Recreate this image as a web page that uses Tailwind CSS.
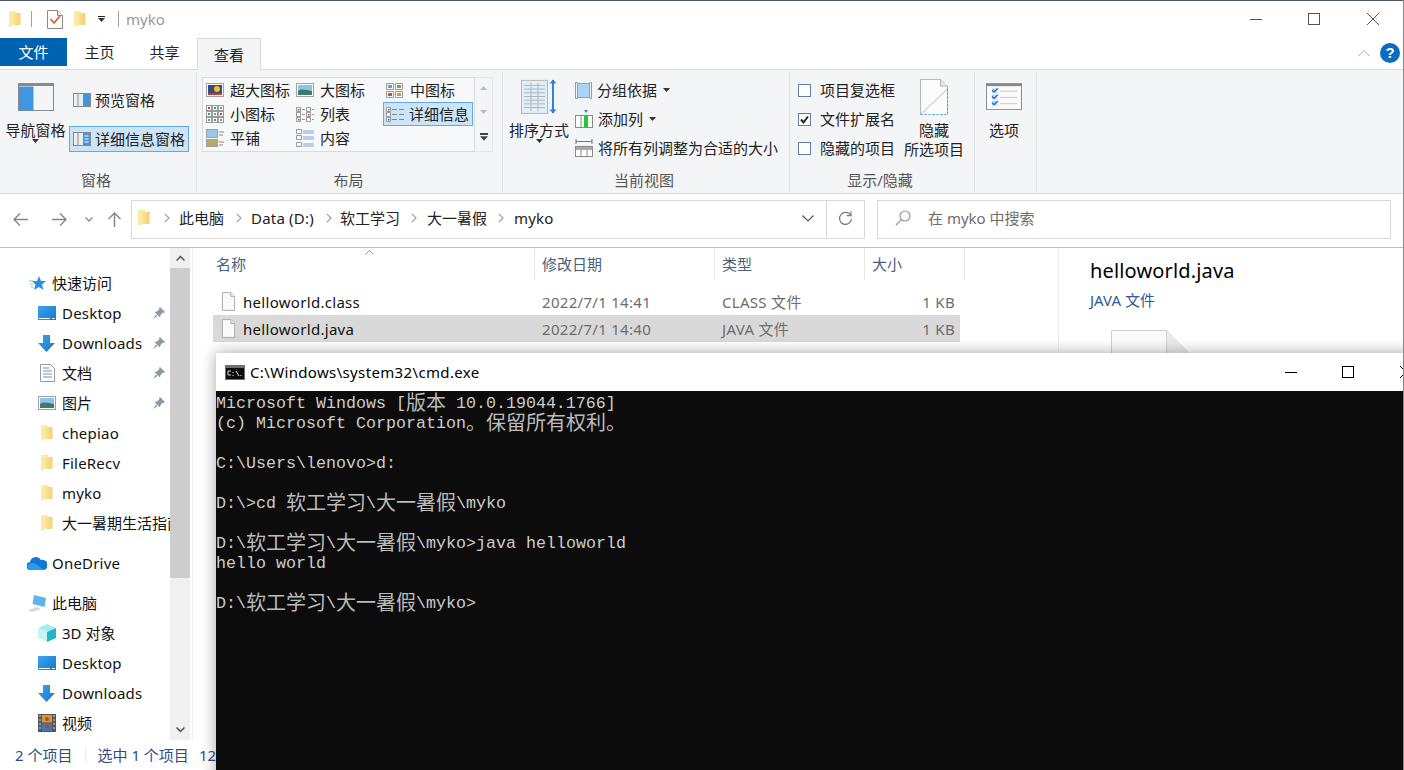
<!DOCTYPE html>
<html lang="zh-CN">
<head>
<meta charset="UTF-8" />
<title>myko</title>
<script src="https://cdn.jsdelivr.net/npm/@tailwindcss/browser@4"></script>
</head>
<body class="bg-white">
<!-- shared icons -->
<svg class="absolute w-0 h-0">
  <defs>
    <linearGradient id="fg" x1="0" x2="1" y1="0" y2="0"><stop offset="0" stop-color="#fdf0b5"/><stop offset="1" stop-color="#f6d06c"/></linearGradient>
    <linearGradient id="dk" x1="0" x2="1" y1="0" y2="1"><stop offset="0" stop-color="#3fa4ea"/><stop offset="1" stop-color="#1278cf"/></linearGradient>
  </defs>
  <symbol id="folder" viewBox="0 0 13 18"><path d="M1 1h7v2h4.500v12H4.500L1 17z" fill="url(#fg)"/><path d="M1 1h7v2H4.500v12L1 17z" fill="#fbe9a4"/></symbol>
  <symbol id="file" viewBox="0 0 16 20"><path d="M1.500.5h9l4 4v15h-13z" fill="#fafafa" stroke="#a6a6a6"/><path d="M10.500.5v4h4" fill="#eee" stroke="#a6a6a6"/></symbol>
  <symbol id="pin" viewBox="0 0 12 12"><path d="M7 0l5 5-1 1-1-.5L7.500 8 7 10.500 1.500 5 4 4.500 6.500 2 6 1zM3 7.500L0 12l4.500-3z" fill="#8b98a6"/></symbol>
  <symbol id="desktop" viewBox="0 0 18 14"><rect width="18" height="14" fill="url(#dk)"/><path d="M1 12.500h11M14 12.500h3" stroke="#fff" stroke-width="1"/></symbol>
  <symbol id="down" viewBox="0 0 17 17"><path d="M5 0h7v8h5l-8.500 9L0 8h5z" fill="url(#dk)"/></symbol>
  <symbol id="chev" viewBox="0 0 8 12"><path d="M2 1l5 5-5 5" fill="none" stroke="#a0a0a0" stroke-width="1.500"/></symbol>
  <symbol id="arrow" viewBox="0 0 7 4"><path d="M0 0h7L3.500 4z" fill="#333"/></symbol>
  <symbol id="pic" viewBox="0 0 18 14"><rect x=".5" y=".5" width="17" height="13" fill="#fff" stroke="#a0a0a0"/><rect x="2" y="2" width="14" height="10" fill="#8cc4e8"/><path d="M2 8c4-3 8-1 14 0v4H2z" fill="#3d7a6a"/></symbol>
  <symbol id="grid" viewBox="0 0 18 18"><rect x=".5" y=".5" width="5" height="5" fill="#fff" stroke="#9a9a9a"/><rect x="6.500" y=".5" width="5" height="5" fill="#fff" stroke="#9a9a9a"/><rect x="12.500" y=".5" width="5" height="5" fill="#fff" stroke="#9a9a9a"/><rect x=".5" y="6.500" width="5" height="5" fill="#fff" stroke="#9a9a9a"/><rect x="6.500" y="6.500" width="5" height="5" fill="#fff" stroke="#9a9a9a"/><rect x="12.500" y="6.500" width="5" height="5" fill="#fff" stroke="#9a9a9a"/><rect x=".5" y="12.500" width="5" height="5" fill="#fff" stroke="#9a9a9a"/><rect x="6.500" y="12.500" width="5" height="5" fill="#fff" stroke="#9a9a9a"/><rect x="12.500" y="12.500" width="5" height="5" fill="#fff" stroke="#9a9a9a"/><path d="M2 2h2v2H2zM14 8h2v2h-2z" fill="#c83a2a"/><path d="M8 2h2v2H8zM2 8h2v2H2zM8 14h2v2H8z" fill="#3d8ac8"/><path d="M14 2h2v2h-2zM8 8h2v2H8zM2 14h2v2H2zM14 14h2v2h-2z" fill="#7ba05b"/></symbol>
</svg>

<div class="relative w-[1404px] h-[770px] overflow-hidden flex flex-col bg-white border-r border-[#8a8a8a] text-[15px] leading-5 text-[#222] [font-family:'Noto_Sans','Noto_Sans_CJK_SC',sans-serif]">
  <div class="h-px shrink-0 bg-[#4b5468]"></div>

  <!-- title bar -->
  <div class="h-[37px] shrink-0 flex items-center pb-px">
    <svg class="ml-[8px] w-[13px] h-[18px]"><use href="#folder"/></svg>
    <div class="ml-[10px] w-px h-[16px] bg-[#a0a0a0]"></div>
    <svg class="ml-[15px] w-[16px] h-[19px]" viewBox="0 0 16 19"><path d="M.5.500h10l5 5v13H.5z" fill="#fff" stroke="#8a8a8a"/><path d="M10.500.500v5h5" fill="#eee" stroke="#8a8a8a"/><path d="M3.500 9l3.500 4 6-7" fill="none" stroke="#e2582a" stroke-width="1.600"/></svg>
    <svg class="ml-[10px] w-[13px] h-[18px]"><use href="#folder"/></svg>
    <div class="ml-[12px] flex flex-col items-center gap-[1px]"><div class="w-[7px] h-px bg-[#222]"></div><svg class="w-[7px] h-[4px]"><use href="#arrow"/></svg></div>
    <div class="ml-[13px] w-px h-[16px] bg-[#a0a0a0]"></div>
    <span class="ml-[7px] text-[#999]">myko</span>
    <div class="ml-auto flex items-center mr-[24px]">
      <div class="w-[12px] h-px bg-[#555]"></div>
      <div class="ml-[46px] w-[12px] h-[12px] border border-[#555]"></div>
      <svg class="ml-[47px] w-[12px] h-[12px]" viewBox="0 0 12 12"><path d="M0 0l12 12M12 0L0 12" stroke="#555" stroke-width="1"/></svg>
    </div>
  </div>

  <!-- tabs -->
  <div class="h-[32px] shrink-0 flex items-start relative">
    <div class="w-[67px] h-[28px] bg-[#0063b1] text-white flex items-center justify-center">文件</div>
    <div class="w-[65px] h-[28px] flex items-center justify-center">主页</div>
    <div class="w-[65px] h-[28px] flex items-center justify-center">共享</div>
    <div class="w-[64px] h-[32px] bg-[#f4f5f7] border border-b-0 border-[#d9d9d9] flex items-center justify-center relative z-10">查看</div>
    <div class="ml-auto flex items-center mr-[3px] mt-[5px] gap-[10px]">
      <svg class="w-[12px] h-[7px]" viewBox="0 0 12 7"><path d="M0 6.500l6-6 6 6" fill="none" stroke="#aaa"/></svg>
      <div class="w-[20px] h-[20px] rounded-full bg-[#0a6bc4] text-white flex items-center justify-center text-[15px] font-bold [font-family:'Liberation_Sans',sans-serif]">?</div>
    </div>
    <div class="absolute left-0 right-0 bottom-0 h-px bg-[#d9d9d9]"></div>
  </div>

  <!-- ribbon -->
  <div class="h-[124px] shrink-0 bg-[#f4f5f7] border-b border-[#d9d9d9] flex pt-[2px] pb-[1px]">
    <!-- 窗格 -->
    <div class="w-[197px] border-r border-[#e1e2e4] flex flex-col">
      <div class="flex-1 flex">
        <div class="w-[69px] pl-[2px] flex flex-col items-center pt-[11px]">
          <svg class="w-[36px] h-[28px]" viewBox="0 0 36 28"><rect x=".5" y=".5" width="35" height="27" fill="#f5f5f5" stroke="#8a8a8a"/><rect x="1" y="1" width="34" height="2" fill="#8a8a8a"/><rect x="1" y="3.500" width="14.500" height="24" fill="#3f97e0"/></svg>
          <span class="mt-[9px] whitespace-nowrap">导航窗格</span>
          <svg class="w-[7px] h-[4px] mt-[-1px]"><use href="#arrow"/></svg>
        </div>
        <div class="flex flex-col">
          <div class="h-[24px] mt-[16px] flex items-center pl-[4px] gap-[4px]">
            <svg class="w-[18px] h-[14px]" viewBox="0 0 18 14"><rect x=".5" y=".5" width="17" height="13" fill="#eee" stroke="#8a8a8a"/><rect x="10" y="1" width="7" height="12" fill="#3f97e0"/><path d="M5 1v12" stroke="#8a8a8a"/></svg>预览窗格
          </div>
          <div class="w-[120px] h-[26px] mt-[14px] bg-[#cce4f7] border border-[#66a7e8] flex items-center pl-[3px] gap-[4px] whitespace-nowrap">
            <svg class="w-[18px] h-[14px]" viewBox="0 0 18 14"><rect x=".5" y=".5" width="17" height="13" fill="#eee" stroke="#8a8a8a"/><rect x="10" y="1" width="7" height="12" fill="#3f97e0"/><path d="M5 1v12" stroke="#8a8a8a"/><path d="M11.500 4h4M11.500 7h4M11.500 10h4" stroke="#fff"/></svg>详细信息窗格
          </div>
        </div>
      </div>
      <div class="h-[24px] pr-[4px] text-[#555] flex items-center justify-center">窗格</div>
    </div>

    <!-- 布局 -->
    <div class="w-[306px] border-r border-[#e1e2e4] flex flex-col">
      <div class="flex-1 flex pl-[5px] pt-[5px]">
        <div class="w-[273px] h-[75px] bg-[#f7f8f9] border border-[#dadbdc] grid grid-cols-[90px_90px_90px] grid-rows-[24px_24px_24px] whitespace-nowrap">
          <div class="flex items-center pl-[3px] gap-[6px]"><svg class="w-[18px] h-[14px]" viewBox="0 0 18 14"><rect x=".5" y=".5" width="17" height="13" fill="#fff" stroke="#a0a0a0"/><rect x="2" y="2" width="14" height="10" fill="#3a4a80"/><circle cx="11" cy="6" r="3" fill="#f2c11d"/><path d="M2 10h14v2H2z" fill="#c83a2a"/></svg>超大图标</div>
          <div class="flex items-center pl-[3px] gap-[6px]"><svg class="w-[18px] h-[14px]"><use href="#pic"/></svg>大图标</div>
          <div class="flex items-center pl-[3px] gap-[7px]"><svg class="w-[17px] h-[15px]" viewBox="0 0 17 15"><path d="M.5.500h7v6h-7zM9.500.500h7v6h-7zM.5 8.500h7v6h-7zM9.500 8.500h7v6h-7z" fill="#fff" stroke="#9a9a9a"/><path d="M2 2h4v3H2z" fill="#6a9ac8"/><path d="M11 2h4v3h-4z" fill="#7ba05b"/><path d="M2 10h4v3H2z" fill="#c8502a"/><path d="M11 10h4v3h-4z" fill="#d49a2a"/></svg>中图标</div>
          <div class="flex items-center pl-[3px] gap-[6px]"><svg class="w-[18px] h-[18px]"><use href="#grid"/></svg>小图标</div>
          <div class="flex items-center pl-[3px] gap-[6px]"><svg class="w-[18px] h-[15px]" viewBox="0 0 18 15"><path d="M.5.500h4v4h-4zM.5 5.500h4v4h-4zM.5 10.500h4v4h-4zM10.500.500h4v4h-4zM10.500 5.500h4v4h-4zM10.500 10.500h4v4h-4z" fill="#fff" stroke="#999"/><path d="M2 2h1.500v1.500H2zM12 7h1.500v1.500H12zM2 12h1.500v1.500H2z" fill="#c83a2a"/><path d="M6 2.500h3M6 7.500h3M6 12.500h3M16 2.500h2M16 7.500h2M16 12.500h2" stroke="#999"/></svg>列表</div>
          <div class="flex items-center pl-[2px] gap-[5px] bg-[#cce4f7] border border-[#66a7e8]"><svg class="w-[18px] h-[15px]" viewBox="0 0 18 15"><path d="M.5.500h4v4h-4zM.5 5.500h4v4h-4zM.5 10.500h4v4h-4z" fill="#fff" stroke="#999"/><path d="M2 2h1.500v1.500H2zM2 12h1.500v1.500H2z" fill="#c83a2a"/><path d="M6 2.500h5M13 2.500h5M6 7.500h5M13 7.500h5M6 12.500h5M13 12.500h5" stroke="#888"/></svg>详细信息</div>
          <div class="flex items-center pl-[3px] gap-[6px]"><svg class="w-[18px] h-[18px]" viewBox="0 0 18 18"><rect x=".5" y=".5" width="11" height="8" fill="#9cc7e4" stroke="#a0a0a0"/><rect x=".5" y="10.500" width="11" height="7" fill="#b8a96a" stroke="#a0a0a0"/><path d="M13 3h5M13 6h4M13 13h5M13 16h4" stroke="#888"/></svg>平铺</div>
          <div class="flex items-center pl-[3px] gap-[6px]"><svg class="w-[18px] h-[18px]" viewBox="0 0 18 18"><path d="M.5.500h5v4h-5zM.5 6.500h5v4h-5zM.5 13.500h5v4h-5z" fill="#fff" stroke="#999"/><path d="M7 2h11M7 4h11M7 8h11M7 10h11M7 15h11M7 17h11" stroke="#7aa7d8"/></svg>内容</div>
          <div></div>
        </div>
        <div class="w-[18px] h-[75px] border border-l-0 border-[#e6e7e9] flex flex-col items-center justify-between py-[8px]">
          <svg class="w-[7px] h-[4px]" viewBox="0 0 7 4"><path d="M0 4h7L3.500 0z" fill="#bbb"/></svg>
          <svg class="w-[7px] h-[4px]" viewBox="0 0 7 4"><path d="M0 0h7L3.500 4z" fill="#bbb"/></svg>
          <div class="flex flex-col items-center gap-[1px] mb-[2px]"><div class="w-[8px] h-[2px] bg-[#444]"></div><svg class="w-[8px] h-[5px]" viewBox="0 0 7 4"><path d="M0 0h7L3.500 4z" fill="#444"/></svg></div>
        </div>
      </div>
      <div class="h-[24px] pr-[2px] flex items-center justify-center text-[#555]">布局</div>
    </div>

    <!-- 当前视图 -->
    <div class="w-[287px] border-r border-[#e1e2e4] flex flex-col">
      <div class="flex-1 flex">
        <div class="w-[72px] flex flex-col items-center pt-[7px]">
          <svg class="w-[36px] h-[35px]" viewBox="0 0 36 38" preserveAspectRatio="none"><rect x=".5" y="1.500" width="26" height="36" fill="#e2eef6" stroke="#b5b5b5"/><path d="M3 7h21M3 11h21M3 15h21M3 19h21M3 23h21M3 27h21M3 31h21M10 4v31M17 4v31" stroke="#a9b4bd"/><path d="M32 1v36" stroke="#2b85d8" stroke-width="2"/><path d="M28.500 5L32 .5 35.500 5zM28.500 33l3.500 4.500 3.500-4.500z" fill="#2b85d8"/></svg>
          <span class="mt-[6px] whitespace-nowrap">排序方式</span>
          <svg class="w-[7px] h-[4px] mt-[-1px]"><use href="#arrow"/></svg>
        </div>
        <div class="flex flex-col pt-[3.500px] whitespace-nowrap">
          <div class="h-[29px] flex items-center gap-[5px]"><svg class="w-[17px] h-[17px]" viewBox="0 0 17 17"><path d="M2.500.500h-2v16h2M14.500.500h2v16h-2" fill="none" stroke="#999"/><rect x="2.500" y="1.500" width="12" height="14" fill="#a9d4f7" stroke="#6aaee8"/></svg>分组依据<svg class="w-[7px] h-[4px] ml-[1px]"><use href="#arrow"/></svg></div>
          <div class="h-[29px] flex items-center gap-[5px]"><svg class="w-[18px] h-[18px]" viewBox="0 0 18 18"><rect x=".5" y="5.500" width="17" height="12" fill="#fff" stroke="#8a8a8a"/><rect x="9" y="5" width="4" height="13" fill="#25c73a"/><path d="M6 6v12" stroke="#8a8a8a"/><path d="M9 0h4l-2 3z" fill="#2b85d8"/></svg>添加列<svg class="w-[7px] h-[4px] ml-[1px]"><use href="#arrow"/></svg></div>
          <div class="h-[29px] flex items-center gap-[5px]"><svg class="w-[18px] h-[18px]" viewBox="0 0 18 18"><path d="M1 2.500h16M1 0v5M17 0v5" fill="none" stroke="#2b85d8"/><rect x=".5" y="7.500" width="17" height="10" fill="#fff" stroke="#8a8a8a"/><rect x="1" y="8" width="16" height="3" fill="#aaa"/><path d="M6 11v6M12 11v6" stroke="#8a8a8a"/></svg>将所有列调整为合适的大小</div>
        </div>
      </div>
      <div class="h-[24px] pr-[4px] flex items-center justify-center text-[#555]">当前视图</div>
    </div>

    <!-- 显示/隐藏 -->
    <div class="w-[185px] border-r border-[#e1e2e4] flex flex-col">
      <div class="flex-1 flex pl-[8px]">
        <div class="w-[106px] flex flex-col pt-[3.500px] whitespace-nowrap">
          <div class="h-[29px] flex items-center gap-[9px]"><div class="w-[13px] h-[13px] bg-white border border-[#5f7fa8]"></div>项目复选框</div>
          <div class="h-[29px] flex items-center gap-[9px]"><svg class="w-[13px] h-[13px]" viewBox="0 0 13 13"><rect x=".5" y=".5" width="12" height="12" fill="#fff" stroke="#5f7fa8"/><path d="M3 6.500l2.500 3L10 3.500" fill="none" stroke="#222" stroke-width="2"/></svg>文件扩展名</div>
          <div class="h-[29px] flex items-center gap-[9px]"><div class="w-[13px] h-[13px] bg-white border border-[#5f7fa8]"></div>隐藏的项目</div>
        </div>
        <div class="w-[60px] flex flex-col items-center pt-[7px] whitespace-nowrap">
          <svg class="w-[28px] h-[36px]" viewBox="0 0 28 38" preserveAspectRatio="none"><path d="M.5 37.500V.500h20l7 7v30" fill="#fcfcfc" stroke="#b5b5b5"/><path d="M20.500.500v7h7" fill="#e8e8e8" stroke="#b5b5b5"/><path d="M.5 37.500l27-27" stroke="#b5b5b5"/><path d="M.5 37.500h27V8" fill="none" stroke="#2b9bf0" stroke-dasharray="2 2"/></svg>
          <span class="mt-[5px]">隐藏</span>
          <span class="-mt-px">所选项目</span>
        </div>
      </div>
      <div class="h-[24px] pr-[4px] flex items-center justify-center text-[#555]">显示/隐藏</div>
    </div>

    <!-- 选项 -->
    <div class="w-[62px] pr-[3px] border-r border-[#e1e2e4] flex flex-col items-center pt-[11px]">
      <svg class="w-[36px] h-[27px]" viewBox="0 0 36 30" preserveAspectRatio="none"><rect x=".5" y=".5" width="35" height="29" fill="#fafafa" stroke="#8a8a8a"/><rect x="1" y="1" width="34" height="2.500" fill="#8a8a8a"/><path d="M14 9h17M14 16h17M14 23h17" stroke="#c8c8c8"/><path d="M6 6h5v5H6zM6 13h5v5H6zM6 20h5v5H6z" fill="#a9d4f7"/><path d="M6 8l2 2 4-4M6 15l2 2 4-4M6 22l2 2 4-4" fill="none" stroke="#2b6cb8" stroke-width="1.300"/></svg>
      <span class="mt-[10px]">选项</span>
    </div>
  </div>

  <!-- address bar -->
  <div class="h-[54px] shrink-0 border-b border-[#bdbdbd] flex items-center pb-[3px] whitespace-nowrap">
    <svg class="ml-[13px] w-[15px] h-[13px]" viewBox="0 0 15 13"><path d="M15 6.500H1M7 .5l-6 6 6 6" fill="none" stroke="#8a8a8a" stroke-width="1.500"/></svg>
    <svg class="ml-[24px] w-[15px] h-[13px]" viewBox="0 0 15 13"><path d="M0 6.500h14M8 .5l6 6-6 6" fill="none" stroke="#8a8a8a" stroke-width="1.500"/></svg>
    <svg class="ml-[18px] w-[8px] h-[5px]" viewBox="0 0 8 5"><path d="M.5.500L4 4 7.500.5" fill="none" stroke="#8a8a8a" stroke-width="1.300"/></svg>
    <svg class="ml-[15px] w-[13px] h-[15px]" viewBox="0 0 13 15"><path d="M6.500 15V1M.5 7l6-6 6 6" fill="none" stroke="#8a8a8a" stroke-width="1.500"/></svg>
    <div class="ml-[10px] w-[734px] h-[39px] border border-[#d9d9d9] flex items-center pb-[2px]">
      <svg class="ml-[5px] w-[13px] h-[18px]"><use href="#folder"/></svg>
      <svg class="ml-[13px] w-[7px] h-[10px]"><use href="#chev"/></svg>
      <span class="ml-[9px]">此电脑</span>
      <svg class="ml-[11px] w-[7px] h-[10px]"><use href="#chev"/></svg>
      <span class="ml-[9px] tracking-[0.2px]">Data (D:)</span>
      <svg class="ml-[11px] w-[7px] h-[10px]"><use href="#chev"/></svg>
      <span class="ml-[8px]">软工学习</span>
      <svg class="ml-[10px] w-[7px] h-[10px]"><use href="#chev"/></svg>
      <span class="ml-[10px]">大一暑假</span>
      <svg class="ml-[10px] w-[7px] h-[10px]"><use href="#chev"/></svg>
      <span class="ml-[10px] tracking-[0.2px]">myko</span>
      <svg class="ml-auto mr-[12px] w-[12px] h-[7px]" viewBox="0 0 12 7"><path d="M.5.500L6 6 11.500.5" fill="none" stroke="#555" stroke-width="1.200"/></svg>
      <div class="w-[38px] h-[37px] -mb-[2px] border-l border-[#d9d9d9] flex items-center justify-center pb-[2px]">
        <svg class="w-[15px] h-[15px]" viewBox="0 0 15 15"><path d="M12.800 4.500A6 6 0 1 0 13.500 8M13 .5v4.200H8.800" fill="none" stroke="#777" stroke-width="1.200"/></svg>
      </div>
    </div>
    <div class="ml-[12px] w-[514px] h-[39px] border border-[#d9d9d9] flex items-center pl-[17px] pb-[2px] text-[#6d6d6d]">
      <svg class="w-[16px] h-[16px] mr-[17px]" viewBox="0 0 16 16"><circle cx="10" cy="6" r="5" fill="none" stroke="#999" stroke-width="1.200"/><path d="M6.500 9.500L1 15" stroke="#999" stroke-width="1.300"/></svg>在 myko 中搜索
    </div>
  </div>

  <!-- main -->
  <div class="h-[492px] shrink-0 flex">
    <!-- nav -->
    <div class="w-[170px] overflow-hidden whitespace-nowrap text-[#111] pt-[20px] shrink-0 tracking-[0.2px]">
      <div class="h-[30px] flex items-center pl-[29px] gap-[6px] tracking-normal"><svg class="w-[17px] h-[15px]" viewBox="0 0 17 15"><path d="M10 0l2 5h5l-4 3.500L14.500 14 10 11l-5 3 1.500-5.500L3 5h5z" fill="#2b90e4"/><path d="M0 5h4M1 8h3M2 11h2" stroke="#7fc0f0"/></svg>快速访问</div>
      <div class="h-[30px] flex items-center pl-[38px] gap-[6px] relative"><svg class="w-[18px] h-[14px]"><use href="#desktop"/></svg>Desktop<svg class="absolute left-[153px] w-[12px] h-[12px]"><use href="#pin"/></svg></div>
      <div class="h-[30px] flex items-center pl-[38px] gap-[7px] relative"><svg class="w-[17px] h-[17px]"><use href="#down"/></svg>Downloads<svg class="absolute left-[153px] w-[12px] h-[12px]"><use href="#pin"/></svg></div>
      <div class="h-[30px] flex items-center pl-[40px] gap-[7px] relative tracking-normal"><svg class="w-[15px] h-[18px]" viewBox="0 0 15 18"><path d="M.5.500h10l4 4v13H.5z" fill="#fff" stroke="#999"/><path d="M3 4h6M3 7h9M3 10h9M3 13h9" stroke="#5f93c8"/></svg>文档<svg class="absolute left-[153px] w-[12px] h-[12px]"><use href="#pin"/></svg></div>
      <div class="h-[30px] flex items-center pl-[38px] gap-[6px] relative tracking-normal"><svg class="w-[18px] h-[14px]"><use href="#pic"/></svg>图片<svg class="absolute left-[153px] w-[12px] h-[12px]"><use href="#pin"/></svg></div>
      <div class="h-[30px] flex items-center pl-[40px] gap-[9px]"><svg class="w-[13px] h-[18px]"><use href="#folder"/></svg>chepiao</div>
      <div class="h-[30px] flex items-center pl-[40px] gap-[9px]"><svg class="w-[13px] h-[18px]"><use href="#folder"/></svg>FileRecv</div>
      <div class="h-[30px] flex items-center pl-[40px] gap-[9px]"><svg class="w-[13px] h-[18px]"><use href="#folder"/></svg>myko</div>
      <div class="h-[30px] flex items-center pl-[40px] gap-[9px] tracking-normal"><svg class="w-[13px] h-[18px] shrink-0"><use href="#folder"/></svg>大一暑期生活指南</div>
      <div class="h-[30px] mt-[10px] flex items-center pl-[27px] gap-[5px]"><svg class="w-[20px] h-[14px]" viewBox="0 0 20 14"><path d="M4 14a4 4 0 0 1-1-8 6 6 0 0 1 11-2 5 5 0 0 1 3 10z" fill="#1278cf"/><path d="M4 14c-2 0-4-3-3-5 2-2 5-3 8-1l8 6z" fill="#2b9bf0"/></svg>OneDrive</div>
      <div class="h-[30px] mt-[10px] flex items-center pl-[28px] gap-[6px] tracking-normal"><svg class="w-[18px] h-[17px]" viewBox="0 0 18 17"><path d="M6 0l12 3-1.500 9-12-3z" fill="#5fb4ee"/><path d="M0 15l9-3 4 2-9 3z" fill="#d8d8d8"/></svg>此电脑</div>
      <div class="h-[30px] flex items-center pl-[38px] gap-[6px] tracking-normal"><svg class="w-[18px] h-[18px]" viewBox="0 0 18 18"><path d="M9 0l9 4-9 4-9-4z" fill="#a8ecec"/><path d="M0 4l9 4v10l-9-4z" fill="#c9f2f2"/><path d="M18 4l-9 4v10l9-4z" fill="#22b5c9"/></svg>3D 对象</div>
      <div class="h-[30px] flex items-center pl-[38px] gap-[6px]"><svg class="w-[18px] h-[14px]"><use href="#desktop"/></svg>Desktop</div>
      <div class="h-[30px] flex items-center pl-[38px] gap-[7px]"><svg class="w-[17px] h-[17px]"><use href="#down"/></svg>Downloads</div>
      <div class="h-[30px] flex items-center pl-[38px] gap-[6px] tracking-normal"><svg class="w-[18px] h-[18px]" viewBox="0 0 18 18"><rect width="18" height="18" fill="#555"/><path d="M1 2h2M1 6h2M1 10h2M1 14h2M15 2h2M15 6h2M15 10h2M15 14h2" stroke="#ddd"/><rect x="4" y="1" width="10" height="7.500" fill="#d49a2a"/><rect x="4" y="9.500" width="10" height="7.500" fill="#3a7ab8"/><circle cx="9" cy="5" r="2" fill="#c83a2a"/><circle cx="9" cy="13" r="2" fill="#c83a2a"/></svg>视频</div>
    </div>
    <!-- nav scrollbar -->
    <div class="w-[20px] bg-[#f0f0f0] flex flex-col shrink-0">
      <div class="h-[20px] flex items-center justify-center"><svg class="w-[9px] h-[6px]" viewBox="0 0 9 6"><path d="M.5 5.500l4-4 4 4" fill="none" stroke="#505050" stroke-width="1.500"/></svg></div>
      <div class="h-[310px] bg-[#cdcdcd]"></div>
      <div class="flex-1"></div>
      <div class="h-[20px] flex items-center justify-center"><svg class="w-[9px] h-[6px]" viewBox="0 0 9 6"><path d="M.5.500l4 4 4-4" fill="none" stroke="#505050" stroke-width="1.500"/></svg></div>
    </div>
    <!-- file list -->
    <div class="w-[866px] ml-[2px] border-l border-[#f0f0f0] pl-[20px] shrink-0 whitespace-nowrap">
      <div class="relative h-[32px] flex text-[#4c607a] items-center">
        <svg class="absolute left-[152px] top-[2px] w-[9px] h-[5px]" viewBox="0 0 9 5"><path d="M.5 4.500l4-4 4 4" fill="none" stroke="#999"/></svg>
        <div class="w-[322px] h-full flex items-center pl-[3px] border-r border-[#e5e5e5]">名称</div>
        <div class="w-[180px] h-full flex items-center pl-[7px] border-r border-[#e5e5e5]">修改日期</div>
        <div class="w-[150px] h-full flex items-center pl-[7px] border-r border-[#e5e5e5]">类型</div>
        <div class="w-[100px] h-full flex items-center pl-[7px] border-r border-[#e5e5e5]">大小</div>
      </div>
      <div class="mt-[8px] h-[27px] w-[747px] flex items-center text-[#6d6d6d] tracking-[0.3px]">
        <div class="w-[321px] flex items-center pl-[8px] gap-[7px] text-[#111]"><svg class="w-[15px] h-[19px]"><use href="#file"/></svg>helloworld.class</div>
        <div class="w-[180px] pl-[8px]">2022/7/1 14:41</div>
        <div class="w-[150px] pl-[8px]">CLASS 文件</div>
        <div class="w-[91px] text-right">1 KB</div>
      </div>
      <div class="h-[27px] w-[747px] flex items-center bg-[#d9d9d9] text-[#6d6d6d] tracking-[0.3px]">
        <div class="w-[321px] flex items-center pl-[8px] gap-[7px] text-[#111]"><svg class="w-[15px] h-[19px]"><use href="#file"/></svg>helloworld.java</div>
        <div class="w-[180px] pl-[8px]">2022/7/1 14:40</div>
        <div class="w-[150px] pl-[8px]">JAVA 文件</div>
        <div class="w-[91px] text-right">1 KB</div>
      </div>
    </div>
    <!-- details pane -->
    <div class="flex-1 border-l border-[#f0f0f0] pl-[31px] pt-[10px] whitespace-nowrap">
      <div class="text-[20px] leading-[26px] text-black tracking-[0.15px]">helloworld.java</div>
      <div class="mt-[6px] text-[#2f5a8f]">JAVA 文件</div>
      <svg class="ml-[21px] mt-[20px] w-[80px] h-[100px]" viewBox="0 0 80 100"><path d="M.5.500h55l24 24v75H.5z" fill="#fafafa" stroke="#d0d0d0"/><path d="M55.500.500v24h24" fill="#ececec" stroke="#d0d0d0"/></svg>
    </div>
  </div>

  <!-- status bar -->
  <div class="h-[29px] shrink-0 flex items-center pl-[15px] text-[#2f4f7a] whitespace-nowrap">
    <span>2 个项目</span>
    <div class="ml-[13px] w-px h-[16px] bg-[#ececec]"></div>
    <span class="ml-[11px]">选中 1 个项目</span>
    <span class="ml-[10px]">12 字节</span>
  </div>

  <!-- cmd window, lies over the explorer -->
  <div class="absolute left-[216px] top-[353px] w-[1200px] h-[430px] flex flex-col shadow-[0_0_14px_rgba(0,0,0,0.35)] z-20">
    <div class="h-[38px] shrink-0 bg-white flex items-center pl-[9px] gap-[5px] text-black whitespace-nowrap">
      <svg class="w-[20px] h-[15px]" viewBox="0 0 20 15"><rect width="20" height="15" fill="#6e6e6e"/><rect x="1" y="3" width="18" height="11" fill="#0c0c0c"/><path d="M3 6h3M3 6v4h3M8 7v1M8 10v1M11 6l3 5M16 10v1" stroke="#ddd"/></svg>
      <span class="tracking-[0.35px]">C:\Windows\system32\cmd.exe</span>
      <div class="absolute left-[1069px] top-[18.500px] w-[12px] h-px bg-black"></div>
      <div class="absolute left-[1126px] top-[13px] w-[12px] h-[12px] border border-black"></div>
      <svg class="absolute left-[1184px] top-[13px] w-[12px] h-[12px]" viewBox="0 0 12 12"><path d="M0 0l12 12M12 0L0 12" stroke="#000"/></svg>
    </div>
    <div class="flex-1 bg-[#0c0c0c] text-[#cccccc] pt-[3px] text-[16.67px] leading-5 [font-family:'Liberation_Mono','Noto_Sans_CJK_SC',monospace]">
      <div class="h-5 whitespace-pre">Microsoft Windows [<span class="text-[20px] align-[-2px] text-[#bbbbbb]">版本</span> 10.0.19044.1766]</div>
      <div class="h-5 whitespace-pre">(c) Microsoft Corporation<span class="text-[20px] align-[-2px] text-[#bbbbbb]">。保留所有权利。</span></div>
      <div class="h-5"></div>
      <div class="h-5 whitespace-pre">C:\Users\lenovo&gt;d:</div>
      <div class="h-5"></div>
      <div class="h-5 whitespace-pre">D:\&gt;cd <span class="text-[20px] align-[-2px] text-[#bbbbbb]">软工学习</span>\<span class="text-[20px] align-[-2px] text-[#bbbbbb]">大一暑假</span>\myko</div>
      <div class="h-5"></div>
      <div class="h-5 whitespace-pre">D:\<span class="text-[20px] align-[-2px] text-[#bbbbbb]">软工学习</span>\<span class="text-[20px] align-[-2px] text-[#bbbbbb]">大一暑假</span>\myko&gt;java helloworld</div>
      <div class="h-5 whitespace-pre">hello world</div>
      <div class="h-5"></div>
      <div class="h-5 whitespace-pre">D:\<span class="text-[20px] align-[-2px] text-[#bbbbbb]">软工学习</span>\<span class="text-[20px] align-[-2px] text-[#bbbbbb]">大一暑假</span>\myko&gt;</div>
    </div>
  </div>
</div>
</body>
</html>
